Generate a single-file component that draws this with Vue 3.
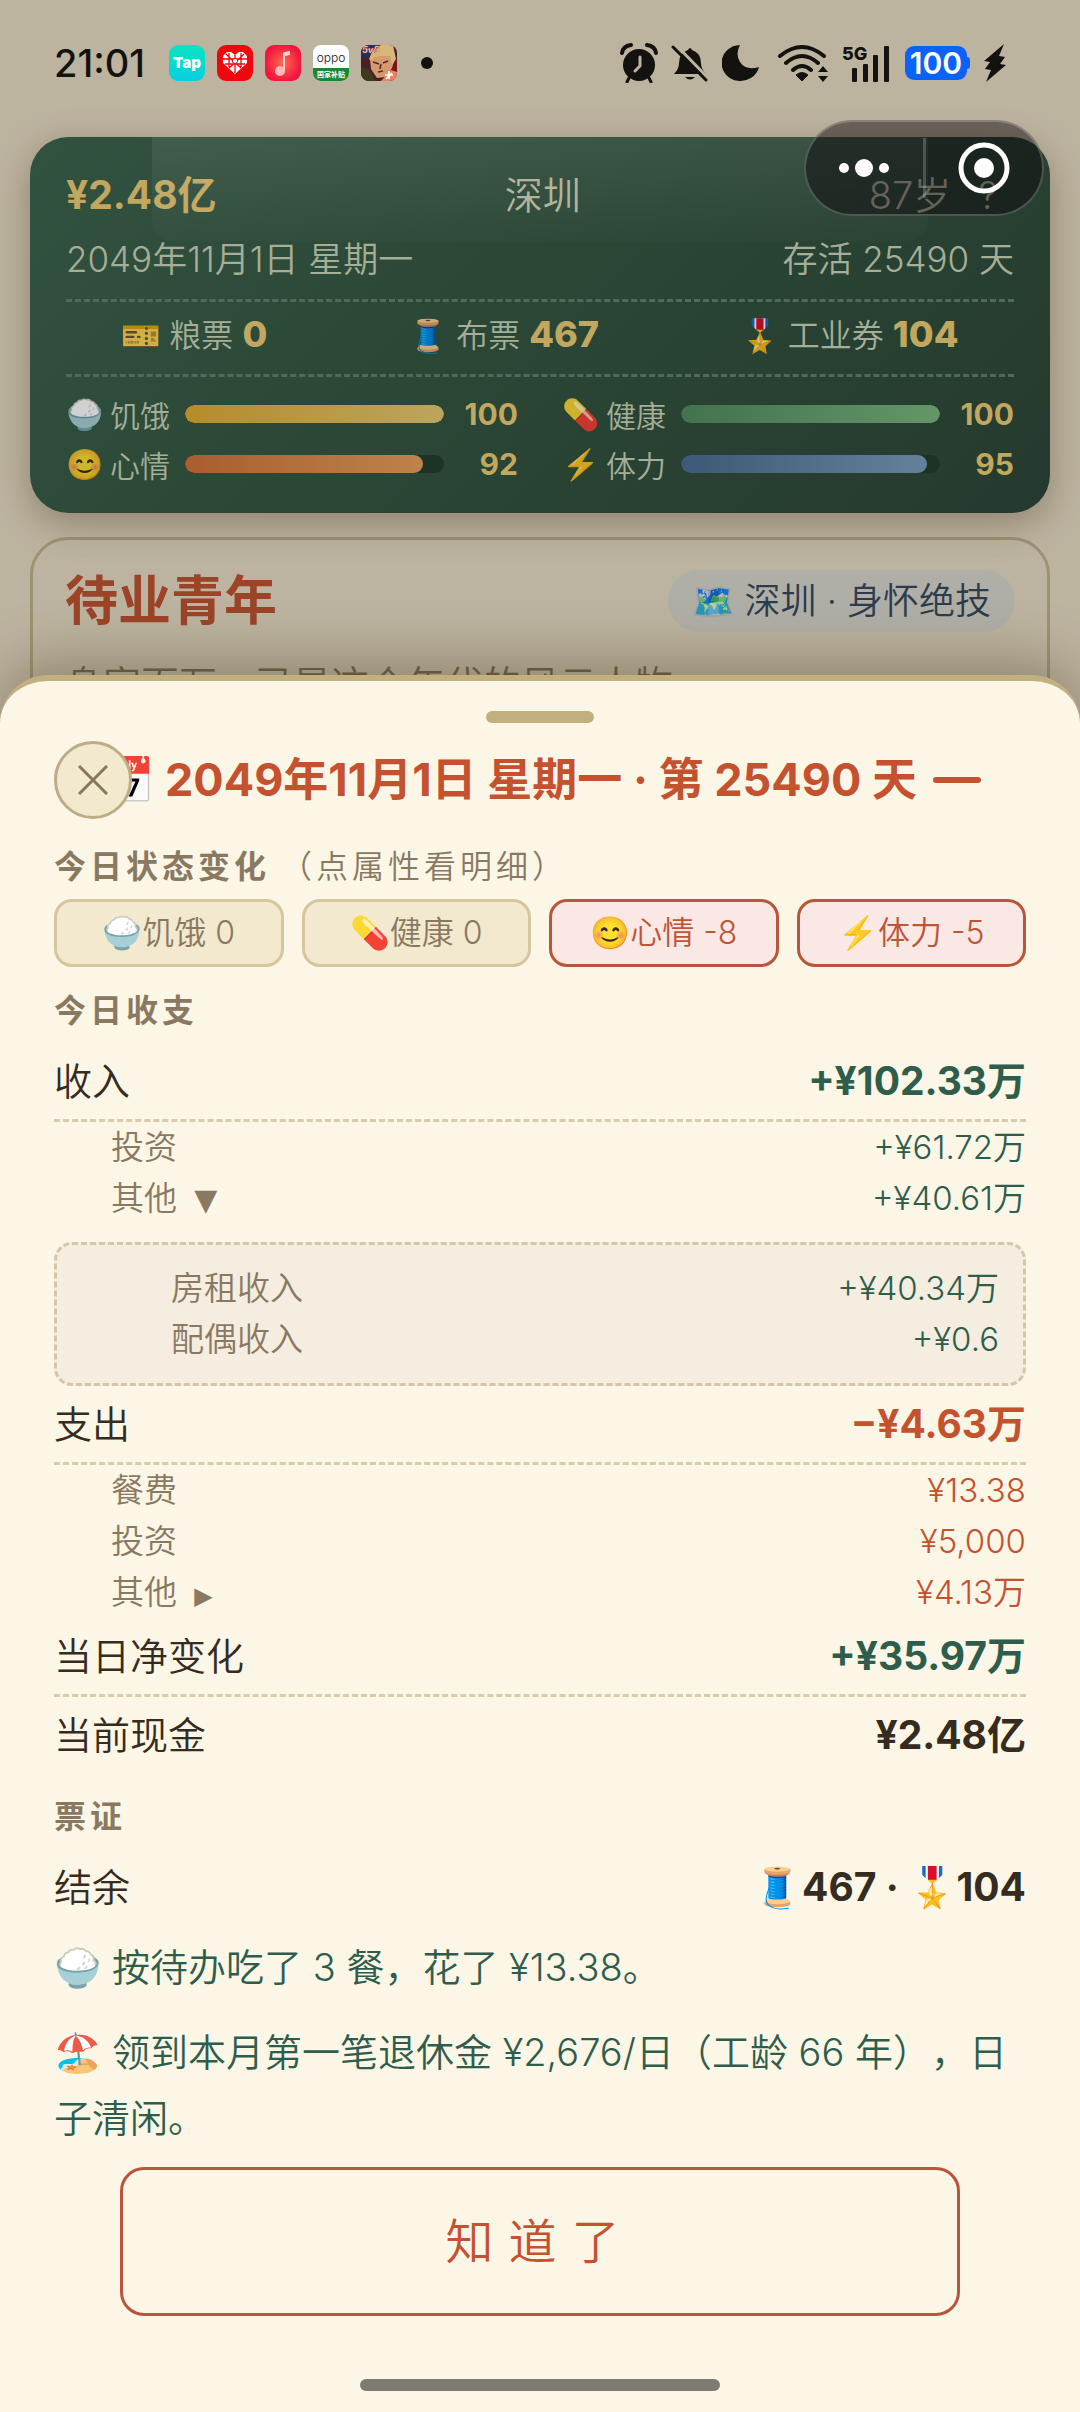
<script setup>
import { ref } from 'vue'

const tickets = [
  { icon: '🎫', name: '粮票', value: '0' },
  { icon: '🧵', name: '布票', value: '467' },
  { icon: '🎖️', name: '工业券', value: '104' },
]
const stats = [
  { icon: '🍚', name: '饥饿', value: 100, kind: 'food' },
  { icon: '💊', name: '健康', value: 100, kind: 'health' },
  { icon: '😊', name: '心情', value: 92, kind: 'mood' },
  { icon: '⚡', name: '体力', value: 95, kind: 'energy' },
]
const changes = [
  { icon: '🍚', label: '饥饿 0', down: false },
  { icon: '💊', label: '健康 0', down: false },
  { icon: '😊', label: '心情 -8', down: true },
  { icon: '⚡', label: '体力 -5', down: true },
]
const incomeOpen = ref(true)
const expenseOpen = ref(false)
</script>

<template>
  <div class="screen">
    <header class="status-bar">
      <div class="status-left">
        <time class="clock">21:01</time>
        <span class="apps">
          <svg class="app" viewBox="0 0 36 36" aria-hidden="true">
            <defs>
              <linearGradient id="tapBg" x1="0" y1="0" x2="0" y2="1">
                <stop offset="0" stop-color="#0ce3c3" /><stop offset="1" stop-color="#08cfe0" />
              </linearGradient>
            </defs>
            <rect width="36" height="36" rx="9" fill="url(#tapBg)" />
            <text x="18" y="23" text-anchor="middle" font-size="15" font-weight="900" fill="#fff">Tap</text>
          </svg>
          <svg class="app" viewBox="0 0 36 36" aria-hidden="true">
            <rect width="36" height="36" rx="9" fill="#f0060c" />
            <path d="M18 29 6 18V11l4-4h4l4 3 4-3h4l4 4v7Z" fill="#fff" />
            <path d="M18 10v18M12 8v14M24 8v14M6 14h24M8 19h20M12 23l12-11M24 23 12 12M9 9l4 4M27 9l-4 4" stroke="#f0060c" stroke-width="1.3" fill="none" />
            <circle cx="18" cy="16" r="2.6" fill="#fff" stroke="#f0060c" />
          </svg>
          <svg class="app" viewBox="0 0 36 36" aria-hidden="true">
            <defs>
              <radialGradient id="musicBg"><stop offset="0" stop-color="#ff6a50" /><stop offset="1" stop-color="#f2163f" /></radialGradient>
            </defs>
            <rect width="36" height="36" rx="9" fill="url(#musicBg)" />
            <path d="M18 25V9q0-2 2-2l5-1v4l-5 1v15Z" fill="#ffd5d2" />
            <circle cx="15" cy="26" r="5" fill="#ffb9b5" />
          </svg>
          <svg class="app" viewBox="0 0 36 36" aria-hidden="true">
            <defs><clipPath id="oppoClip"><rect width="36" height="36" rx="8" /></clipPath></defs>
            <g clip-path="url(#oppoClip)">
              <rect width="36" height="36" fill="#fff" />
              <rect y="23" width="36" height="13" fill="#1d8633" />
              <text x="18" y="17" text-anchor="middle" font-size="12" fill="#111">oppo</text>
              <text x="18" y="32" text-anchor="middle" font-size="7" font-weight="700" fill="#fff">国家补贴</text>
            </g>
          </svg>
          <svg class="app" viewBox="0 0 36 36" aria-hidden="true">
            <defs><clipPath id="heroClip"><rect width="36" height="36" rx="8" /></clipPath></defs>
            <g clip-path="url(#heroClip)">
              <rect width="36" height="36" fill="#4a2027" />
              <path d="M0 0h16v12H0z" fill="#1c2f66" />
              <path d="M0 22l9 3 5 11H0Z" fill="#3b3a1c" />
              <path d="M25 10l11 5v14l-9-3Z" fill="#7c1420" />
              <path d="M9 13 13 5l10-5 9 4 2 9-3 10-6 9-9 1-6-9Z" fill="#d59a6e" />
              <path d="M8 14 12 5 20 0h12l3 14-4 6-2-9-7 0-9 1-3 4Z" fill="#d8b878" />
              <path d="M12 17l6 2M22 18l5-2M17 27l5-1M20 19l-1 5" stroke="#5a2a20" stroke-width="1.6" fill="none" />
              <path d="M20 36l10-11 6 2v9Z" fill="#ef8163" />
              <path d="M28 26v8M24 30h8M25 34l6-6" stroke="#fff" stroke-width="1.6" />
              <text x="1" y="8" font-size="9" font-weight="800" font-style="italic" fill="#fff" stroke="#b0301e" stroke-width=".5">5v5</text>
            </g>
          </svg>
        </span>
        <i class="more-dot"></i>
      </div>
      <div class="status-right">
        <svg width="38" height="40" viewBox="0 0 38 40" aria-label="闹钟">
          <circle cx="19" cy="22" r="16" fill="#14120e" />
          <path d="M2 10Q3 3 11 2M36 10Q35 3 27 2" stroke="#14120e" stroke-width="4" fill="none" stroke-linecap="round" />
          <path d="M9 35 7 39M29 35l2 4" stroke="#14120e" stroke-width="3" stroke-linecap="round" />
          <path d="M20 14v9l-5 5" stroke="#bdb4a0" stroke-width="3" fill="none" stroke-linecap="round" />
        </svg>
        <svg width="38" height="40" viewBox="0 0 38 40" aria-label="静音">
          <path d="M3 31q5-5 5-11 0-10 9-13 2-4 4 0 9 3 9 13 0 6 5 11Z" fill="#14120e" />
          <path d="M14 34h10q-5 5-10 0Z" fill="#14120e" />
          <path d="M5 2 38 36" stroke="#bdb4a0" stroke-width="3" />
          <path d="M2 4 35 37" stroke="#14120e" stroke-width="3" stroke-linecap="round" />
        </svg>
        <svg width="38" height="40" viewBox="0 0 38 40" aria-label="勿扰">
          <path d="M18 2A19 18 0 1 0 37 24Q24 28 18 19 13 11 18 2Z" fill="#14120e" />
        </svg>
        <svg class="wifi" width="52" height="40" viewBox="0 0 52 40" aria-label="无线网络">
          <g fill="none" stroke="#14120e" stroke-width="4" stroke-linecap="round">
            <path d="M3 13Q25-5 47 13M9 20Q25 6 41 20M16 27q9-8 18 0" />
          </g>
          <path d="M19 32q6-5 12 0l-6 6Z" fill="#14120e" stroke="#14120e" stroke-width="1" />
          <path d="M41 29h10l-5-6ZM41 33h10l-5 6Z" fill="#14120e" />
        </svg>
        <svg width="50" height="40" viewBox="0 0 50 40" aria-label="5G 信号">
          <text x="0" y="17" font-size="18" font-weight="800" fill="#14120e">5G</text>
          <g fill="#14120e">
            <rect x="10" y="25" width="5" height="14" rx="1" /><rect x="21" y="21" width="5" height="18" rx="1" />
            <rect x="31" y="12" width="5" height="27" rx="1" /><rect x="42" y="3" width="5" height="36" rx="1" />
          </g>
        </svg>
        <span class="battery">100</span>
        <svg width="22" height="40" viewBox="0 0 22 40" aria-label="充电中">
          <path d="M20 1 0 18l6 1-5 7 6 1-5 12L22 22l-6-1 5-7-6-1Z" fill="#14120e" />
        </svg>
      </div>
    </header>

    <div class="capsule">
      <button class="cap-btn" aria-label="更多">
        <svg width="52" height="20" viewBox="0 0 52 20">
          <circle cx="6" cy="10" r="5" fill="#fff" /><circle cx="26" cy="10" r="9" fill="#fff" /><circle cx="46" cy="10" r="5" fill="#fff" />
        </svg>
      </button>
      <i class="cap-line"></i>
      <button class="cap-btn" aria-label="关闭小程序">
        <svg width="52" height="52" viewBox="0 0 52 52">
          <circle cx="26" cy="26" r="23" fill="none" stroke="#fff" stroke-width="5" /><circle cx="26" cy="26" r="10" fill="#fff" />
        </svg>
      </button>
    </div>

    <section class="hud">
      <div class="hud-top">
        <strong class="cash">¥2.48亿</strong>
        <span>深圳</span>
        <span class="age">87岁 <button class="help">?</button></span>
      </div>
      <div class="hud-date"><span>2049年11月1日 星期一</span><span>存活 25490 天</span></div>
      <div class="tickets">
        <span v-for="t in tickets" :key="t.name" class="ticket">
          <span class="emoji">{{ t.icon }}</span><span>{{ t.name }} <b>{{ t.value }}</b></span>
        </span>
      </div>
      <div class="stats">
        <div v-for="s in stats" :key="s.name" class="stat">
          <span class="emoji">{{ s.icon }}</span>
          <span class="stat-name">{{ s.name }}</span>
          <span class="bar"><i :class="s.kind" :style="{ width: s.value + '%' }"></i></span>
          <b>{{ s.value }}</b>
        </div>
      </div>
    </section>

    <section class="stage">
      <div class="stage-head">
        <h1>待业青年</h1>
        <span class="place"><span class="emoji">🗺️</span>深圳 · 身怀绝技</span>
      </div>
      <p>身家百万，已是这个年代的风云人物</p>
    </section>

    <div class="overlay">
      <section class="sheet" role="dialog" aria-labelledby="day-title">
        <i class="handle"></i>
        <div class="title-row">
          <button class="close" aria-label="关闭">
            <svg width="30" height="30" viewBox="0 0 30 30"><path d="M1 1 29 29M29 1 1 29" stroke="#877758" stroke-width="3" /></svg>
          </button>
          <h2 id="day-title"><span>📅</span><span>2049年11月1日 星期一 · 第 25490 天</span><i></i></h2>
        </div>

        <h3>今日状态变化<small>（点属性看明细）</small></h3>
        <div class="changes">
          <button v-for="c in changes" :key="c.label" class="change" :class="{ down: c.down }">{{ c.icon }}{{ c.label }}</button>
        </div>

        <h3>今日收支</h3>
        <div class="row line"><span>收入</span><b class="gain">+¥102.33万</b></div>
        <div class="sub"><span>投资</span><span class="gain">+¥61.72万</span></div>
        <div class="sub">
          <button class="toggle" :aria-expanded="incomeOpen" @click="incomeOpen = !incomeOpen">其他 <i class="open">▼</i></button>
          <span class="gain">+¥40.61万</span>
        </div>
        <div v-if="incomeOpen" class="detail">
          <div class="sub"><span>房租收入</span><span class="gain">+¥40.34万</span></div>
          <div class="sub"><span>配偶收入</span><span class="gain">+¥0.6</span></div>
        </div>
        <div class="row line"><span>支出</span><b class="loss">−¥4.63万</b></div>
        <div class="sub"><span>餐费</span><span class="loss">¥13.38</span></div>
        <div class="sub"><span>投资</span><span class="loss">¥5,000</span></div>
        <div class="sub">
          <button class="toggle" :aria-expanded="expenseOpen" @click="expenseOpen = !expenseOpen">其他 <i>▶</i></button>
          <span class="loss">¥4.13万</span>
        </div>
        <div class="row line"><span>当日净变化</span><b class="gain">+¥35.97万</b></div>
        <div class="row"><span>当前现金</span><b>¥2.48亿</b></div>

        <h3>票证</h3>
        <div class="row"><span>结余</span><b>🧵467 · 🎖️104</b></div>
        <p class="log">🍚 按待办吃了 3 餐，花了 ¥13.38。</p>
        <p class="log">🏖️ 领到本月第一笔退休金 ¥2,676/日（工龄 66 年），日子清闲。</p>
        <button class="confirm">知道了</button>
        <i class="home-bar"></i>
      </section>
    </div>
  </div>
</template>

<style>
body {
  margin: 0;
}
</style>

<style scoped>
* {
  box-sizing: border-box;
}
.screen {
  position: relative;
  min-height: 100vh;
  overflow: hidden;
  background: #bdb4a0;
  color: #352b20;
  font-family: Inter, "Noto Sans CJK SC", "Noto Color Emoji", sans-serif;
  font-size: 38px;
  font-weight: 350;
  text-spacing-trim: space-all;
}
button {
  margin: 0;
  padding: 0;
  border: 0;
  background: none;
  color: inherit;
  font: inherit;
}
i {
  font-style: normal;
}
svg {
  display: block;
}

.status-bar {
  display: flex;
  align-items: center;
  justify-content: space-between;
  height: 137px;
  padding: 0 74px 12px 54px;
  color: #14120e;
}
.status-left,
.status-right,
.apps {
  display: flex;
  align-items: center;
}
.clock {
  font-size: 38px;
  font-weight: 500;
}
.apps {
  gap: 12px;
  margin-left: 24px;
}
.app {
  width: 36px;
  height: 36px;
}
.more-dot {
  width: 12px;
  height: 12px;
  margin-left: 24px;
  border-radius: 50%;
  background: #14120e;
}
.status-right {
  gap: 13px;
}
.wifi {
  margin-left: 4px;
}
.battery {
  position: relative;
  width: 62px;
  height: 34px;
  margin-right: 4px;
  border-radius: 9px;
  background: #0b62fb;
  color: #fff;
  font-size: 30px;
  font-weight: 600;
  line-height: 34px;
  text-align: center;
}
.battery::after {
  content: "";
  position: absolute;
  top: 11px;
  right: -3px;
  width: 4px;
  height: 12px;
  border-radius: 0 3px 3px 0;
  background: #0b62fb;
}

.capsule {
  position: absolute;
  z-index: 3;
  top: 120px;
  right: 36px;
  display: flex;
  align-items: center;
  width: 240px;
  height: 96px;
  border: 2px solid rgba(255, 255, 255, 0.22);
  border-radius: 48px;
  background: rgba(10, 5, 8, 0.46);
}
.cap-btn {
  display: flex;
  flex: 1;
  align-items: center;
  justify-content: center;
}
.cap-line {
  width: 3px;
  height: 60px;
  background: rgba(255, 255, 255, 0.2);
}

.hud {
  position: relative;
  margin: 0 30px;
  padding: 26px 36px 24px;
  border-radius: 38px;
  background: linear-gradient(135deg, #325240, #2a4635 50%, #253a2e);
  box-shadow: 0 10px 36px rgba(70, 55, 30, 0.4);
  color: #a5ae97;
}
.hud::before {
  content: "";
  position: absolute;
  top: 0;
  left: 12%;
  right: 12%;
  height: 28%;
  border-radius: 0 0 24px 24px;
  background: linear-gradient(rgba(255, 255, 255, 0.08), rgba(255, 255, 255, 0.01));
}
.hud-top,
.hud-date {
  display: flex;
  justify-content: space-between;
  line-height: 64px;
}
.hud-top {
  color: #b0b19a;
}
.cash,
.hud b {
  color: #c2a75f;
  font-weight: 700;
}
.cash {
  font-size: 39px;
}
.help {
  width: 52px;
}
.hud-date {
  font-size: 35px;
  margin-bottom: 8px;
}
.hud .emoji,
.stage .emoji {
  filter: brightness(0.82);
}
.tickets {
  display: flex;
  justify-content: space-around;
  gap: 30px;
  padding: 4px 0 8px;
  border: dashed #4f6a59;
  border-width: 3px 0;
  font-size: 32px;
  line-height: 60px;
}
.ticket {
  display: flex;
  gap: 8px;
}
.ticket b {
  font-size: 36px;
  font-weight: 800;
  line-height: 1;
}
.stats {
  display: grid;
  grid-template-columns: 1fr 1fr;
  column-gap: 44px;
  padding-top: 12px;
}
.stat {
  display: flex;
  align-items: center;
  height: 50px;
  font-size: 30px;
}
.stat .emoji {
  width: 44px;
}
.stat-name {
  width: 75px;
}
.stat b {
  width: 74px;
  text-align: right;
}
.bar {
  flex: 1;
  height: 18px;
  overflow: hidden;
  border-radius: 9px;
  background: #1e3327;
}
.bar i {
  display: block;
  height: 100%;
  border-radius: 9px;
}
.food {
  background: linear-gradient(90deg, #b58c2a, #bba55e);
}
.health {
  background: linear-gradient(90deg, #42724f, #659668);
}
.mood {
  background: linear-gradient(90deg, #aa5d30, #bd8349);
}
.energy {
  background: linear-gradient(90deg, #3b5876, #64819c);
}

.stage {
  height: 400px;
  margin: 24px 30px 0;
  padding: 28px 32px;
  border: 3px solid #9c9274;
  border-radius: 38px;
  background: #bcb4a0;
}
.stage-head {
  display: flex;
  align-items: center;
  justify-content: space-between;
}
h1 {
  margin: 0;
  color: #9b4428;
  font-size: 53px;
  line-height: 66px;
}
.place {
  display: flex;
  gap: 8px;
  padding: 0 24px;
  border-radius: 31px;
  background: #b0afa7;
  color: #2d3c4d;
  font-size: 36px;
  line-height: 62px;
}
.stage p {
  margin: 22px 0 0;
  color: #6f624a;
  line-height: 56px;
}

.overlay {
  position: absolute;
  inset: 0;
  z-index: 2;
  display: flex;
  flex-direction: column;
  justify-content: flex-end;
}
.sheet {
  display: flex;
  flex-direction: column;
  padding: 30px 54px 21px;
  border-top: 6px solid #c3b080;
  border-radius: 48px 48px 0 0;
  background: #fcf6e7;
  box-shadow: 0 -10px 60px rgba(70, 50, 20, 0.4);
}
.handle {
  align-self: center;
  width: 108px;
  height: 12px;
  border-radius: 6px;
  background: #c3b080;
}
.title-row {
  position: relative;
  display: flex;
  align-items: center;
  justify-content: center;
  height: 78px;
  margin: 18px 0 4px;
}
.close {
  position: absolute;
  left: 0;
  display: flex;
  align-items: center;
  justify-content: center;
  width: 78px;
  height: 78px;
  border: 3px solid #bcad85;
  border-radius: 50%;
  background: #f3e9cf;
}
h2 {
  display: flex;
  align-items: center;
  gap: 10px;
  margin: 0;
  color: #c5522f;
  font-size: 45px;
  font-weight: 700;
  line-height: 60px;
  white-space: nowrap;
}
h2 i {
  width: 48px;
  height: 6px;
  margin-left: 6px;
  border-radius: 3px;
  background: #c5522f;
}
h3 {
  margin: 20px 0 8px;
  color: #8a7961;
  font-size: 32px;
  font-weight: 700;
  letter-spacing: 4px;
  line-height: 48px;
}
h3 small {
  margin-left: 10px;
  font-size: 32px;
  font-weight: 350;
}
.changes {
  display: flex;
  gap: 18px;
}
.change {
  flex: 1;
  border: 3px solid #d5c6a0;
  border-radius: 18px;
  background: #f3e9cf;
  color: #8a7961;
  font-size: 32px;
  line-height: 62px;
  white-space: nowrap;
}
.change.down {
  border-color: #b9553a;
  background: #fae8e5;
  color: #bf5437;
}
.row {
  display: flex;
  justify-content: space-between;
  padding: 8px 0;
  font-size: 39px;
  line-height: 60px;
}
.row > span {
  font-size: 38px;
}
.row b {
  font-weight: 700;
}
.line {
  border-bottom: 3px dashed #d8cba9;
}
.gain {
  color: #2f5d4b;
}
.loss {
  color: #c5522f;
}
.sub {
  display: flex;
  justify-content: space-between;
  padding-left: 57px;
  color: #8a7961;
  font-size: 33px;
  line-height: 51px;
}
.sub .gain {
  color: #2f5d4b;
}
.sub .loss {
  color: #c5522f;
}
.toggle i {
  margin-left: 8px;
  font-family: "DejaVu Sans", sans-serif;
  font-size: 24px;
  font-weight: 400;
  line-height: 1;
}
.toggle .open {
  font-size: 30px;
}
.detail {
  margin-top: 18px;
  padding: 18px 24px 18px 57px;
  border: 3px dashed #d5c6a6;
  border-radius: 18px;
  background: #f4ede0;
}
.log {
  margin: 0;
  padding: 9px 0 10px;
  color: #2f5d4b;
  line-height: 66px;
}
.confirm {
  margin: 6px 66px 0;
  border: 3px solid #b9553a;
  border-radius: 24px;
  color: #c5522f;
  font-size: 48px;
  letter-spacing: 15px;
  line-height: 143px;
}
.home-bar {
  align-self: center;
  width: 360px;
  height: 12px;
  margin-top: 63px;
  border-radius: 6px;
  background: #7e7b73;
}
</style>
